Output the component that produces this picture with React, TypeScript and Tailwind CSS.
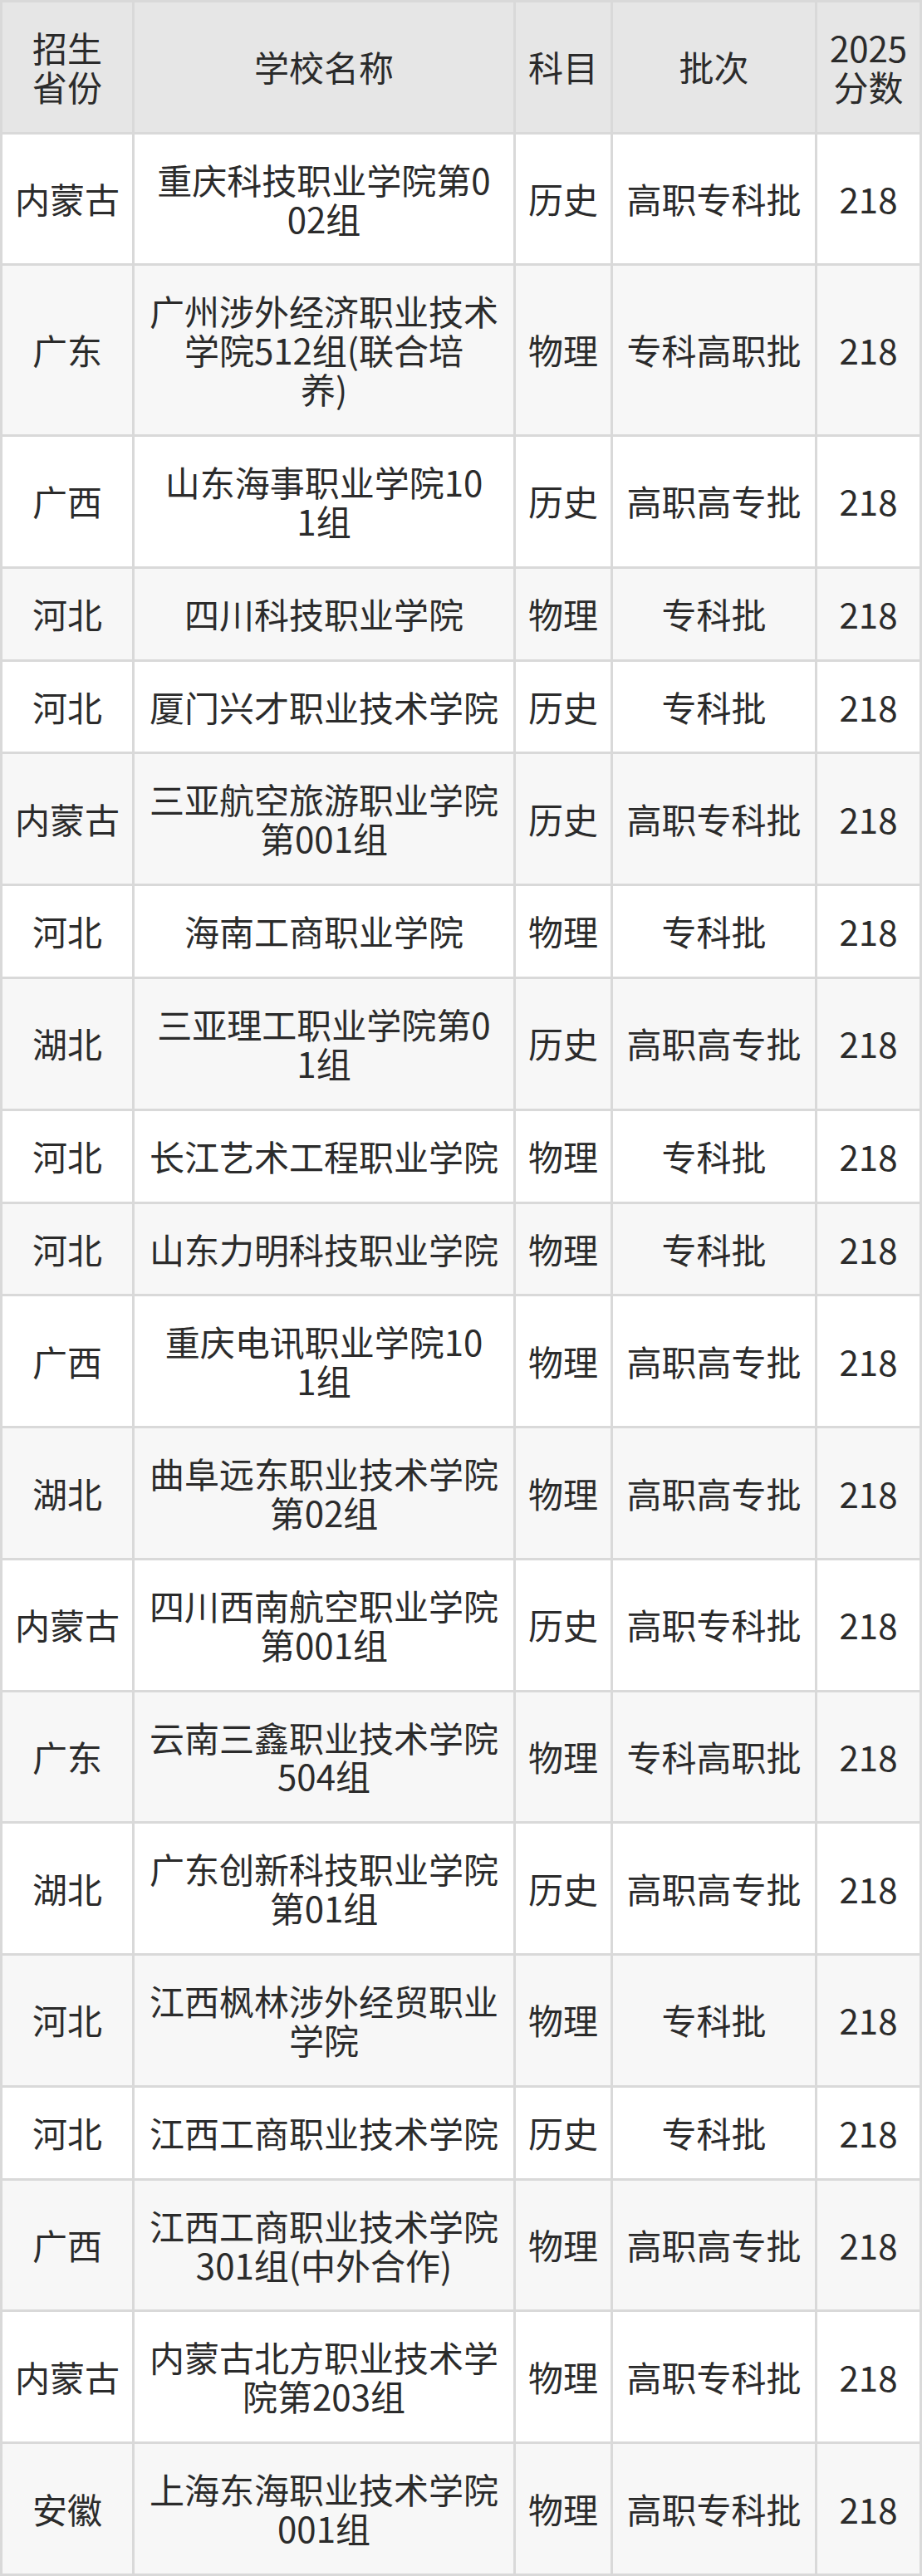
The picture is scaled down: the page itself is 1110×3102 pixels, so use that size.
const rows: [string, string, string, string][] = [
  ["内蒙古", "重庆科技职业学院第0\n02组", "历史", "高职专科批"],
  ["广东", "广州涉外经济职业技术\n学院512组(联合培\n养)", "物理", "专科高职批"],
  ["广西", "山东海事职业学院10\n1组", "历史", "高职高专批"],
  ["河北", "四川科技职业学院", "物理", "专科批"],
  ["河北", "厦门兴才职业技术学院", "历史", "专科批"],
  ["内蒙古", "三亚航空旅游职业学院\n第001组", "历史", "高职专科批"],
  ["河北", "海南工商职业学院", "物理", "专科批"],
  ["湖北", "三亚理工职业学院第0\n1组", "历史", "高职高专批"],
  ["河北", "长江艺术工程职业学院", "物理", "专科批"],
  ["河北", "山东力明科技职业学院", "物理", "专科批"],
  ["广西", "重庆电讯职业学院10\n1组", "物理", "高职高专批"],
  ["湖北", "曲阜远东职业技术学院\n第02组", "物理", "高职高专批"],
  ["内蒙古", "四川西南航空职业学院\n第001组", "历史", "高职专科批"],
  ["广东", "云南三鑫职业技术学院\n504组", "物理", "专科高职批"],
  ["湖北", "广东创新科技职业学院\n第01组", "历史", "高职高专批"],
  ["河北", "江西枫林涉外经贸职业\n学院", "物理", "专科批"],
  ["河北", "江西工商职业技术学院", "历史", "专科批"],
  ["广西", "江西工商职业技术学院\n301组(中外合作)", "物理", "高职高专批"],
  ["内蒙古", "内蒙古北方职业技术学\n院第203组", "物理", "高职专科批"],
  ["安徽", "上海东海职业技术学院\n001组", "物理", "高职专科批"],
];

const cell = "flex items-center justify-center text-center py-[31px] whitespace-pre-line";

export default function App() {
  return (
    <div
      className="w-[1110px] text-[42px] leading-[46.86px] text-[#2b2b2b]"
      style={{ fontFamily: '"Noto Sans CJK SC", "Noto Sans", sans-serif' }}
    >
      <div className="grid grid-cols-[156px_456px_114px_243px_123px] gap-[3px] p-[3px] bg-[#d9d9d9]">
        <div className={`${cell} px-1 bg-[#e6e6e6]`}>{"招生\n省份"}</div>
        <div className={`${cell} px-1 bg-[#e6e6e6]`}>学校名称</div>
        <div className={`${cell} px-1 bg-[#e6e6e6]`}>科目</div>
        <div className={`${cell} px-1 bg-[#e6e6e6]`}>批次</div>
        <div className={`${cell} px-1 bg-[#e6e6e6]`}>{"2025\n分数"}</div>

        {rows.map((r, i) => {
          const bg = i % 2 === 1 ? "bg-[#f7f7f7]" : "bg-white";
          return [
            <div key={`a${i}`} className={`${cell} px-1 ${bg}`}>{r[0]}</div>,
            <div key={`b${i}`} className={`${cell} px-1 ${bg}`}>{r[1]}</div>,
            <div key={`c${i}`} className={`${cell} px-1 ${bg}`}>{r[2]}</div>,
            <div key={`d${i}`} className={`${cell} px-1 ${bg}`}>{r[3]}</div>,
            <div key={`e${i}`} className={`${cell} px-1 ${bg}`}>218</div>,
          ];
        })}
      </div>
    </div>
  );
}
